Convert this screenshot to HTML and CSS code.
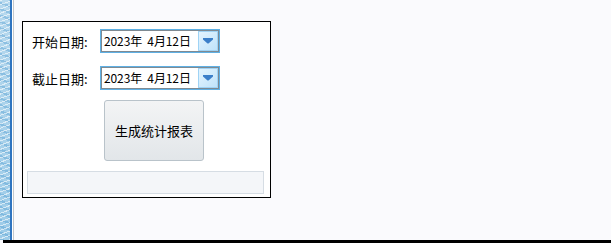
FILE: index.html
```html
<!DOCTYPE html>
<html>
<head>
<meta charset="utf-8">
<link rel="stylesheet" href="styles.css">
</head>
<body>
<div class="screen">
  <div class="desk">
    <div class="strip"></div>
    <div class="edge"></div>
    <div class="main">
      <div class="dialog">
        <div class="row first">
          <span class="label">开始日期:</span>
          <div class="picker">
            <span class="value">2023年  4月12日</span>
            <span class="drop"><svg width="10" height="6" viewBox="0 0 10 6"><path d="M0 0H10V1.5L5.5 5.5H4.5L0 1.5Z" fill="#3b7fc9"/></svg></span>
          </div>
        </div>
        <div class="row second">
          <span class="label">截止日期:</span>
          <div class="picker">
            <span class="value">2023年  4月12日</span>
            <span class="drop"><svg width="10" height="6" viewBox="0 0 10 6"><path d="M0 0H10V1.5L5.5 5.5H4.5L0 1.5Z" fill="#3b7fc9"/></svg></span>
          </div>
        </div>
        <button class="btn">生成统计报表</button>
        <div class="status"></div>
      </div>
    </div>
  </div>
  <div class="bottom"></div>
</div>
</body>
</html>
```

FILE: styles.css
```css
html, body {
  margin: 0;
  padding: 0;
  background: #fafafd;
  font-family: "Noto Sans CJK SC", "Noto Sans", sans-serif;
  overflow: hidden;
}
.screen {
  width: 611px;
  height: 243px;
  display: flex;
  flex-direction: column;
}
.desk {
  height: 240px;
  display: flex;
}
.strip {
  width: 10px;
  background:
    repeating-linear-gradient(160deg, rgba(255,255,255,0.6) 0 1px, transparent 1px 4px),
    repeating-linear-gradient(20deg, rgba(70,150,205,0.35) 0 2px, transparent 2px 6px),
    linear-gradient(#b7d9ee, #9ccbe8);
}
.edge {
  width: 4px;
  background: linear-gradient(90deg, #2f74c0 0 2px, #ffffff 2px 3px, #c4c8cc 3px 4px);
}
.main {
  flex: 1;
  padding: 21px 0 0 8px;
  background: #fafafd;
}
.dialog {
  width: 247px;
  height: 175px;
  border: 1px solid #000;
  background: #fff;
  display: flex;
  flex-direction: column;
}
.row {
  display: flex;
  align-items: center;
  padding-left: 9px;
  height: 24px;
}
.row.first { margin-top: 7px; }
.row.second { margin-top: 13px; }
.label {
  width: 68px;
  font-size: 13px;
  color: #000;
}
.picker {
  width: 116px;
  height: 20px;
  border: 1px solid #5fb0e4;
  box-shadow: inset 0 0 0 1px #7f8a92;
  background: #fff;
  display: flex;
  align-items: center;
  padding: 1px;
}
.value {
  flex: 1;
  font-size: 12px;
  color: #000;
  padding-left: 2px;
  line-height: 20px;
  white-space: pre;
  letter-spacing: -0.1px;
}
.drop {
  width: 20px;
  height: 20px;
  box-sizing: border-box;
  border: 1px solid #9fd3f5;
  background: linear-gradient(135deg, #e4f4fe, #bfe3fa);
  display: flex;
  align-items: center;
  justify-content: center;
}
.btn {
  margin: 10px 0 0 81px;
  width: 100px;
  height: 61px;
  border: 1px solid #b9c3ca;
  border-radius: 3px;
  background: linear-gradient(#f3f4f5, #e2e6e9);
  font-family: "Noto Sans CJK SC", sans-serif;
  font-size: 13px;
  color: #000;
  padding: 0;
}
.status {
  margin: 10px 0 0 4px;
  width: 235px;
  height: 21px;
  border: 1px solid #d6dde4;
  background: #f4f6f9;
}
.bottom {
  height: 3px;
  margin-left: 3px;
  background: #000;
}
```
